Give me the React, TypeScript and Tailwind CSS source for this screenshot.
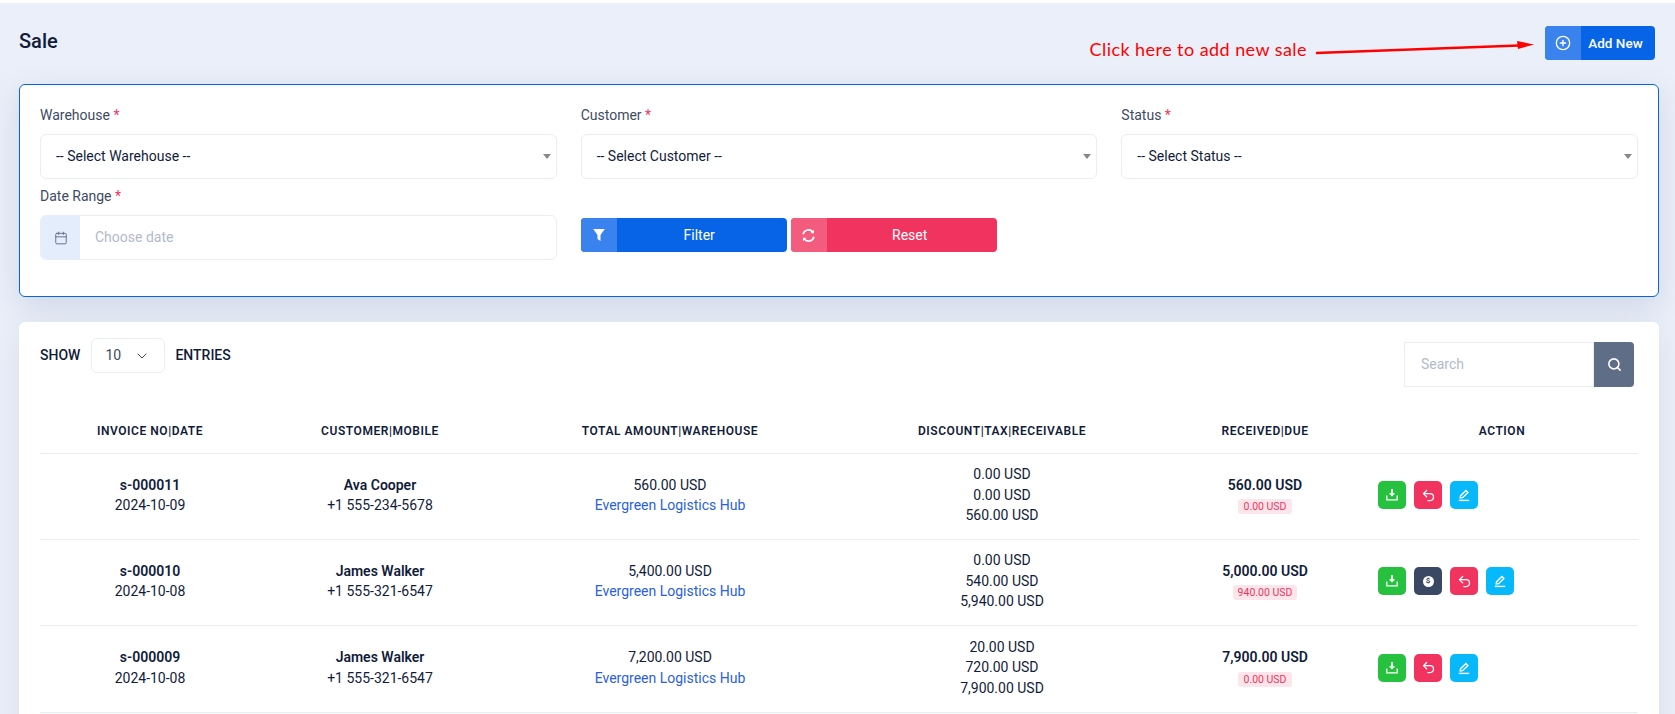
import React from "react";
import { Calendar, ChevronDown, CirclePlus, Search, Undo2 } from "lucide-react";

type Sale = {
  invoice: string;
  date: string;
  customer: string;
  mobile: string;
  total: string;
  discount: string;
  tax: string;
  receivable: string;
  received: string;
  due: string;
  payable?: boolean;
};

const sales: Sale[] = [
  { invoice: "s-000011", date: "2024-10-09", customer: "Ava Cooper", mobile: "+1 555-234-5678", total: "560.00 USD", discount: "0.00 USD", tax: "0.00 USD", receivable: "560.00 USD", received: "560.00 USD", due: "0.00 USD" },
  { invoice: "s-000010", date: "2024-10-08", customer: "James Walker", mobile: "+1 555-321-6547", total: "5,400.00 USD", discount: "0.00 USD", tax: "540.00 USD", receivable: "5,940.00 USD", received: "5,000.00 USD", due: "940.00 USD", payable: true },
  { invoice: "s-000009", date: "2024-10-08", customer: "James Walker", mobile: "+1 555-321-6547", total: "7,200.00 USD", discount: "20.00 USD", tax: "720.00 USD", receivable: "7,900.00 USD", received: "7,900.00 USD", due: "0.00 USD" },
];

const Caret = () => (
  <span className="h-0 w-0 border-x-[4px] border-t-[5px] border-x-transparent border-t-[#888888]" />
);

const SelectField = ({ label, value }: { label: string; value: string }) => (
  <div>
    <label className="block h-[22px] text-[14px] leading-[22px] text-[#3e4b5f]">
      {label} <span className="text-[#f1345f]">*</span>
    </label>
    <div className="mt-[8px] flex h-[45px] items-center justify-between rounded-md border border-[#e8eef6] bg-white pl-[15px] pr-[5px] text-[14px] text-[#111c3a]">
      <span>{value}</span>
      <Caret />
    </div>
  </div>
);

const IconButton = ({ color, children }: { color: string; children: React.ReactNode }) => (
  <span className={`flex h-[28px] w-[28px] items-center justify-center rounded-[5px] text-white ${color}`}>{children}</span>
);

const DownloadIcon = () => (
  <svg width="14" height="14" viewBox="0 0 14 14" fill="none">
    <path d="M7 1v5.2" stroke="currentColor" strokeWidth="1.8" />
    <path d="M3.9 5.2h6.2L7 8.6z" fill="currentColor" />
    <path d="M1.8 7.6v4.3h10.4V7.6" stroke="currentColor" strokeWidth="1.3" />
  </svg>
);

const EditIcon = () => (
  <svg width="14" height="14" viewBox="0 0 14 14" fill="none" stroke="currentColor" strokeWidth="1.4">
    <path d="M3.2 10 3.6 7.7 8.9 2.4l2 2-5.3 5.3z" />
    <path d="M1.8 12.4h10.4" />
  </svg>
);

const App = () => {
  return (
    <div className="relative h-[714px] overflow-hidden bg-[#eaeff9] font-['Roboto',sans-serif]">
      <div className="h-[3px] bg-white" />

      <div className="flex h-[81px] items-start justify-between pl-[19px] pr-[20px]">
        <h1 className="mt-[26px] text-[20px] leading-[24px] font-medium text-[#111c3a]">Sale</h1>
        <div className="mt-[23px] flex items-center">
          <span className="mr-[7px] mt-[12px] font-['Lato',sans-serif] text-[18px] leading-[22px] tracking-[0.44px] text-[#ff0000]">Click here to add new sale</span>
          <svg width="224" height="18" viewBox="0 0 224 18" className="mr-[7px] mt-[8px]">
            <path d="M2 15 205 7.5" stroke="#ff0000" strokeWidth="2.5" />
            <path d="M203 3 220 6.5 204 11z" fill="#ff0000" />
          </svg>
          <button className="flex h-[34px] w-[110px] overflow-hidden rounded-[4px] bg-[#0764e6] text-[13.5px] font-medium text-white">
            <span className="flex h-full w-[36px] items-center justify-center bg-[#3a83ee]">
              <CirclePlus size={16} strokeWidth={2} />
            </span>
            <span className="flex h-full flex-1 items-center justify-center pr-[5px]">Add New</span>
          </button>
        </div>
      </div>

      <section className="ml-[19px] mr-[16px] h-[213px] rounded-md border border-[#0764e6] bg-white px-[20px] pt-[19px] shadow-[0_10px_30px_rgba(90,104,150,0.18)]">
        <div className="grid grid-cols-3 gap-x-[24px]">
          <SelectField label="Warehouse" value="-- Select Warehouse --" />
          <SelectField label="Customer" value="-- Select Customer --" />
          <SelectField label="Status" value="-- Select Status --" />
          <div className="mt-[6px]">
            <label className="block h-[22px] text-[14px] leading-[22px] text-[#3e4b5f]">
              Date Range <span className="text-[#f1345f]">*</span>
            </label>
            <div className="mt-[8px] flex h-[45px] overflow-hidden rounded-md border border-[#e8eef6] bg-white text-[14px]">
              <span className="flex w-[39px] items-center justify-center bg-[#e3edfc] text-[#5f6d86]">
                <Calendar size={14} strokeWidth={1.6} />
              </span>
              <span className="flex items-center pl-[15px] text-[#b3bac9]">Choose date</span>
            </div>
          </div>
          <div className="col-span-2 mt-[39px] flex gap-[4px]">
            <button className="flex h-[34px] w-[206px] overflow-hidden rounded-[4px] bg-[#0764e6] text-[14px] text-white">
              <span className="flex h-full w-[36px] items-center justify-center bg-[#3a83ee]">
                <svg width="14" height="14" viewBox="0 0 14 14" fill="currentColor"><path d="M1.2 1h11.6L8.5 7v6L5.5 11V7z" /></svg>
              </span>
              <span className="flex h-full flex-1 items-center justify-center pr-[5px]">Filter</span>
            </button>
            <button className="flex h-[34px] w-[206px] overflow-hidden rounded-[4px] bg-[#f1345f] text-[14px] text-white">
              <span className="flex h-full w-[36px] items-center justify-center bg-[#f35c7f]">
                <svg width="15" height="15" viewBox="0 0 15 15" fill="none" stroke="currentColor" strokeWidth="1.7">
                  <path d="M2.1 6.2A5.5 5.5 0 0 1 11.8 4" />
                  <path d="M12.9 8.8A5.5 5.5 0 0 1 3.2 11" />
                  <path d="M13 1.8v3.4H9.6z" fill="currentColor" stroke="none" />
                  <path d="M2 13.2V9.8h3.4z" fill="currentColor" stroke="none" />
                </svg>
              </span>
              <span className="flex h-full flex-1 items-center justify-center pr-[4px]">Reset</span>
            </button>
          </div>
        </div>
      </section>

      <section className="ml-[19px] mr-[16px] mt-[25px] h-[420px] rounded-md bg-white px-[21px] pt-[15px] shadow-[0_10px_30px_rgba(90,104,150,0.12)]">
        <div className="flex items-start justify-between pr-[4px]">
          <div className="mt-[1px] flex items-center gap-[10px] text-[14px] font-medium uppercase text-[#111c3a]">
            <span>Show</span>
            <span className="ml-[1px] flex h-[35px] w-[74px] items-center justify-between rounded-md border border-[#e8eef6] pl-[13px] pr-[14px] text-[14px] font-normal text-[#3e4b5f]">
              10
              <ChevronDown size={16} strokeWidth={1.5} />
            </span>
            <span>Entries</span>
          </div>
          <div className="mt-[5px] flex h-[45px] w-[230px]">
            <span className="flex flex-1 items-center border border-[#e8eef6] pl-[16px] text-[14px] text-[#b3bac9]">Search</span>
            <span className="flex w-[40px] items-center justify-center rounded-r-[4px] bg-[#5f6d86] text-white">
              <Search size={15} strokeWidth={2.5} />
            </span>
          </div>
        </div>

        <table className="mt-[16px] w-full table-fixed border-collapse text-center text-[14px] text-[#111c3a]">
          <colgroup>
            <col className="w-[220px]" />
            <col className="w-[240px]" />
            <col className="w-[340px]" />
            <col className="w-[324px]" />
            <col className="w-[202px]" />
            <col />
          </colgroup>
          <thead>
            <tr className="h-[50px] border-b border-[#e8eef6] text-[12px] uppercase tracking-[0.55px]">
              <th className="pt-[6px] font-semibold">Invoice No|Date</th>
              <th className="pt-[6px] font-semibold">Customer|Mobile</th>
              <th className="pt-[6px] font-semibold">Total Amount|Warehouse</th>
              <th className="pt-[6px] font-semibold">Discount|Tax|Receivable</th>
              <th className="pt-[6px] font-semibold">Received|Due</th>
              <th className="pt-[6px] font-semibold">Action</th>
            </tr>
          </thead>
          <tbody>
            {sales.map((sale) => (
              <tr key={sale.invoice} className="h-[86px] border-b border-[#e8eef6] leading-[20.5px] last:h-[87px]">
                <td className="pb-[2px]">
                  <div className="font-semibold">{sale.invoice}</div>
                  <div>{sale.date}</div>
                </td>
                <td className="pb-[2px]">
                  <div className="font-semibold">{sale.customer}</div>
                  <div>{sale.mobile}</div>
                </td>
                <td className="pb-[2px]">
                  <div>{sale.total}</div>
                  <div className="text-[#2a5fe0]">Evergreen Logistics Hub</div>
                </td>
                <td className="pb-[2px]">
                  <div>{sale.discount}</div>
                  <div>{sale.tax}</div>
                  <div>{sale.receivable}</div>
                </td>
                <td className="pb-[2px]">
                  <div className="font-semibold">{sale.received}</div>
                  <span className="mt-[2px] inline-block rounded-[3px] bg-[#fde6eb] px-[5px] text-[10.5px] leading-[15px] text-[#f1345f]">{sale.due}</span>
                </td>
                <td className="pl-[12px] pb-[2px]">
                  <div className="flex gap-[8px]">
                    <IconButton color="bg-[#26c13f]"><DownloadIcon /></IconButton>
                    {sale.payable && (
                      <IconButton color="bg-[#3b4863]">
                        <span className="flex h-[11px] w-[11px] items-center justify-center rounded-full bg-white text-[8px] font-bold leading-none text-[#3b4863]">$</span>
                      </IconButton>
                    )}
                    <IconButton color="bg-[#f1345f]"><Undo2 size={15} strokeWidth={2} /></IconButton>
                    <IconButton color="bg-[#07b8fb]"><EditIcon /></IconButton>
                  </div>
                </td>
              </tr>
            ))}
          </tbody>
        </table>
      </section>
    </div>
  );
};

export default App;
